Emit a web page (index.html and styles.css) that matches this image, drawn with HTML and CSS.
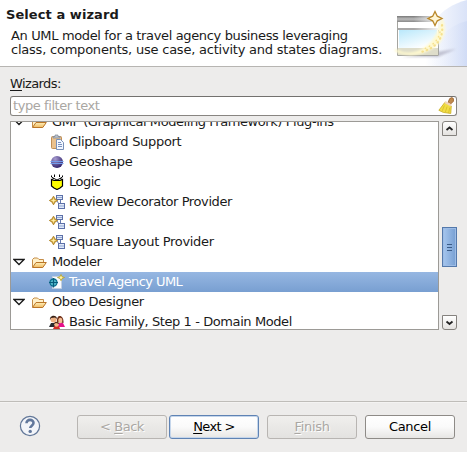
FILE: index.html
```html
<!DOCTYPE html>
<html lang="en">
<head>
<meta charset="utf-8">
<title>Select a wizard</title>
<link rel="stylesheet" href="styles.css">
</head>
<body>
<svg class="defs" aria-hidden="true">
  <defs>
    <linearGradient id="gold" x1="0" y1="0" x2="0" y2="1"><stop offset="0" stop-color="#fff0b8"/><stop offset="1" stop-color="#f0ba62"/></linearGradient>
    <linearGradient id="sky" x1="0" y1="0" x2=".6" y2="1"><stop offset="0" stop-color="#b9e8fb"/><stop offset="1" stop-color="#fff"/></linearGradient>
    <linearGradient id="bar" x1="0" y1="0" x2="0" y2="1"><stop offset="0" stop-color="#777"/><stop offset=".5" stop-color="#bbb"/><stop offset="1" stop-color="#888"/></linearGradient>
    <linearGradient id="fade"><stop offset=".4" stop-color="#fff" stop-opacity="0"/><stop offset="1" stop-color="#fff" stop-opacity=".9"/></linearGradient>
    <linearGradient id="swoosh" x1="1" y1="0" x2="0" y2="0"><stop offset="0" stop-color="#dae3f8"/><stop offset="1" stop-color="#fff"/></linearGradient>
    <linearGradient id="swoosh2" x1="1" y1="0" x2="0" y2="0"><stop offset="0" stop-color="#c9d6f4"/><stop offset="1" stop-color="#f6f8fe" stop-opacity="0"/></linearGradient>
    <radialGradient id="ball" cx=".35" cy=".25" r=".75"><stop offset="0" stop-color="#a79bd0"/><stop offset="1" stop-color="#33266f"/></radialGradient>
    <filter id="soft" x="-30%" y="-30%" width="160%" height="160%"><feGaussianBlur stdDeviation="1.3"/></filter>
  </defs>
  <symbol id="folder" viewBox="0 0 16 16">
    <path d="M1.500 13V5.500L3 4H6.500L8 5.500H12.500V8" fill="#fff0c8" stroke="#c58d48"/>
    <path d="M1.500 13.500L5 8.500H15.300L11.800 13.500z" fill="url(#gold)" stroke="#ba7528"/>
  </symbol>
  <symbol id="node" viewBox="0 0 16 16">
    <path d="M11.500 6v4M8 7l2 3" stroke="#6478ae" fill="none"/>
    <rect x="7.500" y="1.500" width="6" height="4" fill="#dfe8f8" stroke="#5c70a8"/>
    <rect x="9.500" y="9.500" width="6" height="5" fill="#dfe8f8" stroke="#5c70a8"/>
    <path d="M8 3.500h5M10 12h5" stroke="#8fa5d3"/>
    <path d="M4.500 2.200L6 5L8.600 6.500L6 8L4.500 10.800L3 8L.400 6.500L3 5z" fill="#dcb54f" stroke="#b18427"/>
    <path d="M4.500 4.500v4M2.500 6.500h4" stroke="#fff2b1" stroke-width=".8"/>
  </symbol>
</svg>
<div class="dialog">
  <header class="head">
    <div class="copy">
      <h1>Select a wizard</h1>
      <p><span class="line one">An UML model for a travel agency business leveraging</span><span class="line two">class, components, use case, activity and states diagrams.</span></p>
    </div>
    <svg class="banner" width="75" height="66" viewBox="392 0 75 66">
      <path d="M434 21C443 10 452 4 467 0V66H425z" fill="url(#swoosh)"/>
      <path d="M438 40C446 30 455 24 467 21V66H430z" fill="url(#swoosh2)" opacity=".55"/>
      <path d="M402 57L456 49L438 57z" fill="#a9a9bc" opacity=".65" filter="url(#soft)"/>
      <rect x="397" y="16" width="42" height="40" fill="#fff"/>
      <rect x="397" y="16" width="42" height="6" fill="url(#bar)"/>
      <path d="M397.500 22v33.500h41V22" fill="none" stroke="#a5a5a0"/>
      <rect x="398" y="28" width="40" height="2" fill="#a8a8a8"/>
      <rect x="399" y="30" width="38" height="18" fill="url(#sky)"/>
      <rect x="398" y="48" width="40" height="7" fill="#deddca"/>
      <rect x="397" y="16" width="42" height="14" fill="url(#fade)"/>
      <path d="M395 50C412 59 436 50 442 20C453 47 412 62 395 50z" fill="#fff9cf" stroke="#fff9cf" stroke-width="2" filter="url(#soft)"/>
      <g fill="none" stroke="#f5e08f" stroke-linecap="round" stroke-dasharray=".5 4"><path d="M442 25C444 40 434 49 421 52" stroke-width="2.200"/><path d="M440 32C438 42 431 46 424 49" stroke-width="1.500"/></g>
      <path d="M435 11.500L437.300 16.200L442 18.500L437.300 20.800L435 25.500L432.700 20.800L428 18.500L432.700 16.200z" fill="#fff6d5" stroke="#b98729" stroke-width="1.300"/>
    </svg>
  </header>
  <main class="body">
    <label class="label"><u>W</u>izards:</label>
    <div class="filter">
      <span class="hint">type filter text</span>
      <svg width="17" height="17" viewBox="0 0 16 16">
        <path d="M9.500 5L11 1.500L13 .500L14.500 1.500V4L12 6.500z" fill="#c18a4c" stroke="#99602c" stroke-width=".8"/>
        <path d="M6.500 5L12.500 8.500L12 15.500L8.500 15L5 14.500L.800 12.500z" fill="#f1dd45" stroke="#cbb12b" stroke-width=".8"/>
        <path d="M6 8L4 13M8.500 9L7 14M11 10L10 15" stroke="#d2b927" stroke-width=".7"/>
        <path d="M6.500 4.700L12.500 8" stroke="#f1d5b8" stroke-width="2"/>
      </svg>
    </div>
    <div class="list">
      <div class="tree">
        <div class="rows">
          <div class="row top"><svg class="arrow" width="12" height="8"><path d="M1 1.500h10L6 6.500z"/></svg><svg class="ico"><use href="#folder"/></svg><span class="gmf">GMF (Graphical Modeling Framework) Plug-ins</span></div>
          <div class="row"><svg class="ico" viewBox="0 0 16 16"><rect x="2.500" y="2.500" width="10" height="12" rx="1" fill="#eac18d" stroke="#c18e54"/><path d="M4 4V2.500h2V1h3v1.500h2V4z" fill="#b9c2cd" stroke="#7e8796" stroke-width=".7"/><path d="M7.500 5.500h4l3 3v7h-7z" fill="#f2f7ff" stroke="#7990b8"/><path d="M9 8.500h3M9 10.500h4M9 12.500h4" stroke="#7991bf"/></svg><span class="clip">Clipboard Support</span></div>
          <div class="row"><svg class="ico" viewBox="0 0 16 16"><circle cx="8" cy="8" r="6" fill="url(#ball)"/><path d="M1.500 7.500h13M1.500 9.500h13" stroke="#729bea"/></svg><span class="geo">Geoshape</span></div>
          <div class="row"><svg class="ico" viewBox="0 0 16 16"><path d="M2.500 5.500L5 6.500H11L13.500 5.500V12L11 14L8 15.500L5 14L2.500 12z" fill="#ff0" stroke="#000" stroke-width="1.200"/><path d="M2.500 1.500v1.500L5 4.500M5.500 .500V3M13.500 1.500v1.500L11 4.500M10.500 .500V3M5 4.500L8 6L11 4.500M2.500 5.500L5 4.500M13.500 5.500L11 4.500" fill="none" stroke="#000"/></svg><span class="logic">Logic</span></div>
          <div class="row"><svg class="ico"><use href="#node"/></svg><span class="review">Review Decorator Provider</span></div>
          <div class="row"><svg class="ico"><use href="#node"/></svg><span class="service">Service</span></div>
          <div class="row"><svg class="ico"><use href="#node"/></svg><span class="square">Square Layout Provider</span></div>
          <div class="row top"><svg class="arrow" width="12" height="8"><path d="M1 1.500h10L6 6.500z"/></svg><svg class="ico"><use href="#folder"/></svg><span class="modeler">Modeler</span></div>
          <div class="row selected"><svg class="ico" viewBox="0 0 16 16"><path d="M3.500 2.500h9v12h-9z" fill="#f8fbff" stroke="#c3cfe0"/><circle cx="4.500" cy="8.500" r="3.500" fill="#52b8cb" stroke="#086f8d" stroke-width="1.300"/><path d="M4.500 4v9.500M0 8.500h9" stroke="#075c7c" stroke-width="1.200"/><path d="M12 .500L13 2.700L15.500 3.500L13 4.500L12 6.700L11 4.500L8.500 3.500L11 2.700z" fill="#fff3a2" stroke="#b8a024" stroke-width=".8"/></svg><span class="travel">Travel Agency UML</span></div>
          <div class="row top"><svg class="arrow" width="12" height="8"><path d="M1 1.500h10L6 6.500z"/></svg><svg class="ico"><use href="#folder"/></svg><span class="obeo">Obeo Designer</span></div>
          <div class="row"><svg class="ico" viewBox="0 0 16 16"><path d="M0 13L2 9H7L9 13z" fill="#26282f"/><circle cx="4.500" cy="5.500" r="3" fill="#edb083"/><path d="M1 6C0 1 8 0 8 5L6 3.500L2 4z" fill="#382016"/><path d="M8 13L9 9H14L16 13z" fill="#e6108a"/><path d="M8 8C7 0 15 0 14.500 9z" fill="#713019"/><ellipse cx="11.300" cy="6.500" rx="2" ry="2.800" fill="#f4bd95"/><path d="M4 15L5.500 12H10L11 15z" fill="#d22b27"/><circle cx="7.500" cy="10.500" r="2.300" fill="#f1b88a"/><path d="M5 10C5 7 10 7 10 10L7 9z" fill="#542916"/></svg><span class="basic">Basic Family, Step 1 - Domain Model</span></div>
        </div>
      </div>
      <div class="scroll">
        <div class="step up"><svg width="13" height="13"><path d="M3.500 8L6.500 5.500L9.500 8"/></svg></div>
        <div class="thumb"><i></i><i></i><i></i></div>
        <div class="step down"><svg width="13" height="13"><path d="M3.500 5.500L6.500 8L9.500 5.500"/></svg></div>
      </div>
    </div>
  </main>
  <footer class="foot">
    <svg class="help" width="22" height="22" viewBox="0 0 22 22"><circle cx="11" cy="11" r="9.600" fill="#f3f5f9" stroke="#627798" stroke-width="1.200"/><path d="M7.500 8.300C7.500 3.500 14.700 4 14.500 8C14.500 10.400 11.300 10.800 11.200 13" fill="none" stroke="#62789c" stroke-width="2.600"/><circle cx="11.200" cy="16.400" r="1.700" fill="#62789c"/></svg>
    <div class="btn off"><span class="back">&lt; <u>B</u>ack</span></div>
    <div class="btn next"><span class="nx"><u>N</u>ext &gt;</span></div>
    <div class="btn off finish"><span class="fin"><u>F</u>inish</span></div>
    <div class="btn cancel"><span class="can">Cancel</span></div>
  </footer>
</div>
</body>
</html>
```
FILE: styles.css
```css
* { box-sizing: border-box; }
body { margin: 0; background: #edeceb; font: 13px/20px "DejaVu Sans", sans-serif; color: #1a1a1a; overflow: hidden; }
svg { flex: none; display: block; }
.defs { position: absolute; width: 0; height: 0; }
.dialog { width: 467px; height: 452px; display: flex; flex-direction: column; }
.head { height: 67px; background: #fff; border-bottom: 1px solid #b7b5b2; display: flex; justify-content: space-between; }
.copy { padding: 6px 0 0 6px; white-space: nowrap; width: 392px; }
h1 { margin: 0; font-size: 13px; line-height: 17px; letter-spacing: 0.07px; }
p { margin: 6px 0 0 5px; }
.line { display: block; line-height: 14px; }
.one { letter-spacing: -0.355px; }
.two { letter-spacing: -0.22px; }
.body { height: 334px; padding: 7px 10px 0; }
.label { display: block; height: 22px; line-height: 20px; letter-spacing: -0.6px; }
u { text-decoration: underline; text-underline-offset: 2px; text-decoration-thickness: 1px; text-decoration-skip-ink: none; }
.filter { width: 447px; height: 20px; border: 1px solid #888581; border-top-color: #73716e; border-radius: 3px; background: #fff; display: flex; justify-content: space-between; padding: 0 1px 0 2px; line-height: 18px; color: #aaa7a3; }
.hint { letter-spacing: -0.42px; }
.list { display: flex; gap: 3px; margin-top: 5px; height: 209px; }
.tree { width: 429px; height: 209px; border: 1px solid #9c9a96; background: #fff; overflow: hidden; }
.rows { margin-top: -10px; }
.row { height: 20px; padding-left: 38px; display: flex; align-items: center; gap: 4px; white-space: nowrap; }
.row.top { padding-left: 2px; }
.row.top .ico { margin-left: 2px; margin-right: 1px; }
.ico { width: 16px; height: 16px; }
.arrow path { fill: #fff; stroke: #1a1a1a; stroke-width: 1.3; }
.gmf { letter-spacing: -0.43px; }
.clip { letter-spacing: -0.31px; }
.geo { letter-spacing: -0.2px; }
.logic, .service { letter-spacing: -0.5px; }
.review { letter-spacing: -0.4px; }
.square { letter-spacing: -0.32px; }
.modeler { letter-spacing: -0.42px; }
.travel { letter-spacing: -0.58px; }
.obeo { letter-spacing: -0.39px; }
.basic { letter-spacing: -0.41px; }
.selected { background: linear-gradient(#96b7e2, #789fd1); color: #fff; }
.scroll { width: 15px; display: flex; flex-direction: column; justify-content: space-between; }
.step { width: 15px; height: 15px; border: 1px solid #85827e; background: linear-gradient(#fff, #e4e2df); }
.step path { fill: none; stroke: #222; stroke-width: 1.8; }
.up { border-radius: 3px 3px 0 0; }
.down { border-radius: 0 0 3px 3px; }
.thumb { width: 15px; height: 40px; margin-top: 43px; border: 1px solid #5479ab; background: linear-gradient(90deg, #a6c6ee, #779fd2); display: flex; flex-direction: column; gap: 2px; align-items: center; justify-content: center; box-shadow: inset 0 0 0 1px #9dbce5; }
.thumb i { width: 5px; height: 1px; background: #3b5c88; }
.foot { height: 51px; border-top: 1px solid #bfbdb9; box-shadow: inset 0 1px #f4f3f2; display: flex; padding: 13px 0 0 19px; }
.help { margin-right: 36px; }
.btn { width: 90px; height: 24px; border: 1px solid #8e8b87; border-radius: 3px; background: linear-gradient(#fff, #fafafa 50%, #e7e6e4); text-align: center; line-height: 22px; color: #000; }
.off { color: #aaa7a3; border-color: #b8b5b2; background: linear-gradient(#f0efed, #e3e2e0); text-shadow: 1px 1px #fff; }
.next { margin-left: 2px; border-color: #5f83b4; box-shadow: inset 0 0 0 1px #c5d6eb; }
.finish, .cancel { margin-left: 8px; }
.back { letter-spacing: -0.45px; }
.nx { letter-spacing: -0.6px; }
.fin { letter-spacing: -0.3px; }
.can { letter-spacing: -0.35px; }
```
